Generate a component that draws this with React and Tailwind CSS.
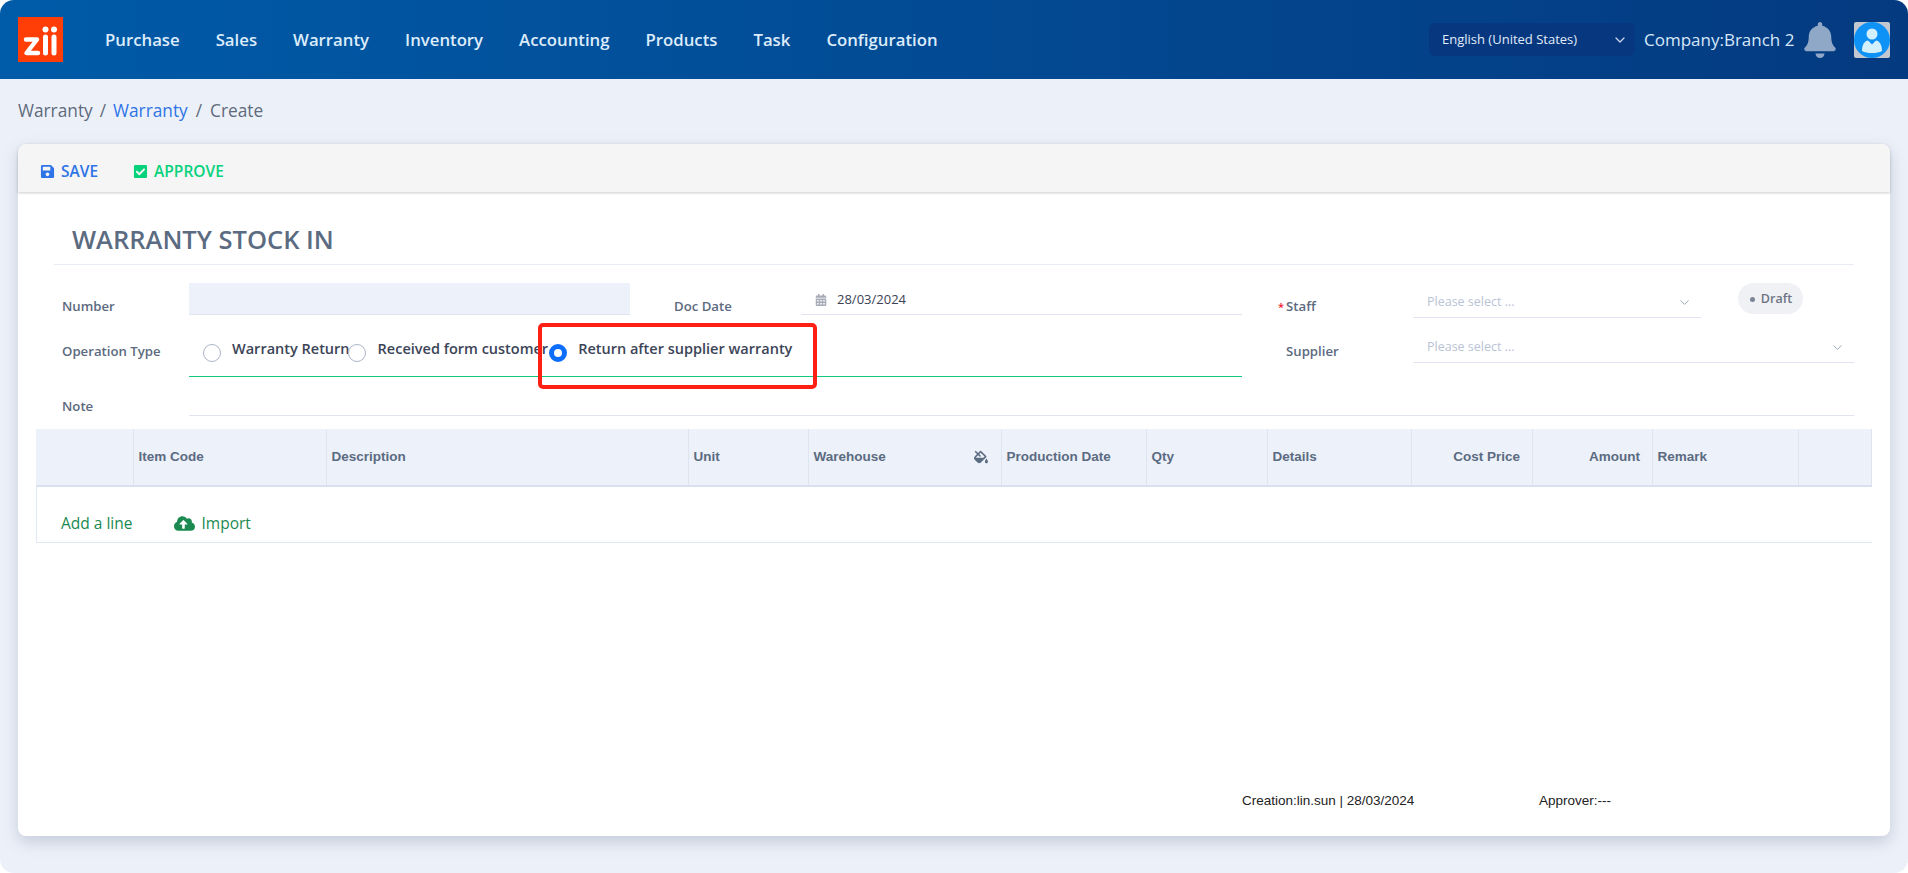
import React from "react";
import { FaSave, FaCheckSquare, FaCalendarAlt, FaFillDrip, FaCloudUploadAlt, FaBell } from "react-icons/fa";
import { ChevronDown } from "lucide-react";

function Logo() {
  return (
    <svg width="45" height="45" viewBox="0 0 45 45" className="shrink-0">
      <rect width="45" height="45" fill="#ff3d06" />
      <path d="M8 22.5H19L8.5 36H20" fill="none" stroke="#fff" strokeWidth="4.4" strokeLinecap="round" strokeLinejoin="round" />
      <circle cx="27.5" cy="12.5" r="3" fill="#fff" />
      <circle cx="36" cy="12.5" r="3" fill="#fff" />
      <path d="M27.5 20V36M36 20V36" stroke="#fff" strokeWidth="5" strokeLinecap="round" />
    </svg>
  );
}

function Avatar() {
  return (
    <svg width="36" height="36" viewBox="0 0 36 36" className="shrink-0">
      <rect width="36" height="36" rx="2" fill="#c3c8d0" />
      <circle cx="18" cy="18" r="18" fill="#0e92f5" />
      <circle cx="18" cy="12" r="5.5" fill="#d3f0ff" />
      <path d="M8 29c0-7 3-10 6-10.5l4 4 4-4c3 .5 6 3.5 6 10.5-3 1.5-6 2-10 2s-7-.5-10-2z" fill="#d3f0ff" />
    </svg>
  );
}

const nav = ["Purchase", "Sales", "Warranty", "Inventory", "Accounting", "Products", "Task", "Configuration"];

function Radio({ checked, className = "" }) {
  if (checked) {
    return <span className={`mt-[14px] h-[18px] w-[18px] shrink-0 rounded-full border-[5px] border-[#0d6efd] bg-white ${className}`} />;
  }
  return <span className={`mt-[14px] h-[18px] w-[18px] shrink-0 rounded-full border border-[#adb5c7] bg-white ${className}`} />;
}

function Placeholder({ top }) {
  return (
    <div className={`flex items-center justify-between pl-[14px] pr-[9px] text-[12.5px] font-normal text-[#b9c3d6] ${top}`}>
      <span>Please select ...</span>
      <ChevronDown size={15} strokeWidth={1.5} className="text-[#98a3b6]" />
    </div>
  );
}

const columns = [
  { w: "w-[98px]", label: "" },
  { w: "w-[193px]", label: "Item Code" },
  { w: "w-[362px]", label: "Description" },
  { w: "w-[120px]", label: "Unit" },
  { w: "w-[193px]", label: "Warehouse", icon: true },
  { w: "w-[145px]", label: "Production Date" },
  { w: "w-[121px]", label: "Qty" },
  { w: "w-[144px]", label: "Details" },
  { w: "w-[121px]", label: "Cost Price", right: true },
  { w: "w-[120px]", label: "Amount", right: true },
  { w: "w-[146px]", label: "Remark" },
  { w: "flex-1", label: "" },
];

export default function App() {
  return (
    <div className="flex h-[873px] w-full flex-col overflow-hidden rounded-[14px] bg-[#ecf1f9] font-['Open_Sans',sans-serif]">
      <header className="flex h-[79px] shrink-0 items-center bg-gradient-to-r from-[#005ba8] to-[#043a80] pl-[18px] pr-[18px]">
        <Logo />
        <nav className="ml-[42px] flex gap-[36px] text-[16.75px] font-semibold text-[#dcecfb]">
          {nav.map((n) => (
            <span key={n}>{n}</span>
          ))}
        </nav>
        <div className="ml-auto flex h-[33px] w-[206px] items-center justify-between rounded-[6px] bg-[#06377f] pl-[13px] pr-[7px] pt-[1px] text-[13px] text-[#e2ecf8]">
          <span>English (United States)</span>
          <ChevronDown size={16} strokeWidth={2} className="text-[#c6d3e6]" />
        </div>
        <span className="ml-[9px] w-[158px] text-[17px] text-[#d6e8fa]">Company:Branch 2</span>
        <FaBell size={36} className="shrink-0 text-[#8fa8c8]" />
        <span className="ml-[16px]">
          <Avatar />
        </span>
      </header>

      <div className="flex h-[63px] shrink-0 items-center pl-[18px] text-[17.3px] text-[#5f6a7c]">
        <span>Warranty</span>
        <span className="mx-[7px]">/</span>
        <span className="text-[#2f74e6]">Warranty</span>
        <span className="mx-[8px]">/</span>
        <span>Create</span>
      </div>

      <main className="mx-[18px] mt-[2px] flex h-[692px] flex-col rounded-[8px] bg-white shadow-[0_6px_16px_rgba(60,75,110,0.22)]">
        <div className="flex h-[48px] shrink-0 items-center rounded-t-[8px] bg-[#f5f5f5] pl-[22px] pt-[7px] text-[15.5px] font-semibold shadow-[0_1px_3px_rgba(0,0,0,0.2)]">
          <span className="flex items-center gap-[6px] text-[#2f74e6]">
            <FaSave size={15} />
            SAVE
          </span>
          <span className="ml-[35px] flex items-center gap-[6px] text-[#07d27c]">
            <FaCheckSquare size={15} />
            APPROVE
          </span>
        </div>

        <div className="mx-[36px] flex h-[73px] shrink-0 items-center border-b border-[#e8edf5] pl-[18px] pt-[23px] text-[25.5px] font-semibold text-[#5b6b81]">
          WARRANTY STOCK IN
        </div>

        <div className="mt-[18px] pl-[44px] pr-[36px] text-[13.2px] font-semibold text-[#5c6a80]">
          <div className="flex h-[47px]">
            <span className="w-[127px] pt-[14px]">Number</span>
            <div className="h-[32px] w-[441px] border-b border-[#dfe4f0] bg-[#edf1f9]" />
            <span className="ml-[44px] w-[127px] pt-[14px]">Doc Date</span>
            <div className="flex h-[32px] w-[441px] items-start gap-[10px] border-b border-[#dfe4f0] pl-[14px] pt-[7px] text-[13px] font-normal text-[#3b4354]">
              <FaCalendarAlt size={12} className="mt-[4px] text-[#a9acb8]" />
              <span>28/03/2024</span>
            </div>
            <span className="ml-[36px] w-[135px] pt-[14px]">
              <span className="mr-[2px] text-[11px] text-[#f5222d]">*</span>Staff
            </span>
            <div className="h-[35px] w-[288px] border-b border-[#dfe4f0]">
              <Placeholder top="pt-[10px]" />
            </div>
            <div className="ml-[37px] flex h-[31px] w-[65px] items-center justify-center gap-[6px] rounded-full bg-[#f0f1f4] pl-[1px] pt-[1px] text-[12.5px] text-[#6b7585]">
              <span className="h-[5px] w-[5px] rounded-full bg-[#7b8597]" />
              Draft
            </div>
          </div>

          <div className="flex h-[47px]">
            <span className="w-[127px] pt-[12px]">Operation Type</span>
            <div className="relative flex h-[47px] w-[1053px] items-start border-b border-[#0fca7a] pl-[14px] text-[14.5px] text-[#3c4457]">
              <Radio />
              <span className="ml-[11px] pt-[8px]">Warranty Return</span>
              <Radio className="ml-[-2px]" />
              <span className="ml-[12px] pt-[8px]">Received form customer</span>
              <Radio checked className="ml-[1px]" />
              <span className="ml-[11px] pt-[8px]">Return after supplier warranty</span>
              <div className="absolute left-[349px] top-[-7px] h-[66px] w-[279px] rounded-[5px] border-[4px] border-[#ff2015]" />
            </div>
            <span className="ml-[44px] w-[127px] pt-[12px]">Supplier</span>
            <div className="h-[33px] flex-1 border-b border-[#dfe4f0]">
              <Placeholder top="pt-[8px]" />
            </div>
          </div>

          <div className="flex h-[39px]">
            <span className="w-[127px] pt-[20px]">Note</span>
            <div className="h-[39px] flex-1 border-b border-[#dfe4f0]" />
          </div>
        </div>

        <div className="mx-[18px] mt-[13px] shrink-0">
          <div className="flex h-[58px] border-b-2 border-[#d8e2ef] bg-[#edf1f9] font-['Liberation_Sans',sans-serif] text-[13.5px] font-bold text-[#5b6b81]">
            {columns.map((c, i) => (
              <div
                key={i}
                className={`${c.w} flex items-center justify-between border-r border-[#dfe5f0] px-[4.5px] ${c.right ? "justify-end pr-[12px]" : ""}`}
              >
                <span>{c.label}</span>
                {c.icon && <FaFillDrip size={14} className="mr-[9px]" />}
              </div>
            ))}
          </div>
          <div className="flex h-[56px] items-center gap-[42px] border-b border-l border-[#e0e8f2] pl-[24px] pt-[18px] text-[15.5px] font-medium text-[#1a8a50]">
            <span>Add a line</span>
            <span className="flex items-center gap-[6px]">
              <FaCloudUploadAlt size={21} />
              Import
            </span>
          </div>
        </div>

        <footer className="mt-auto flex pb-[25px] pl-[1224px] font-['Liberation_Sans',sans-serif] text-[13.5px] text-[#222]">
          <span className="w-[297px]">Creation:lin.sun | 28/03/2024</span>
          <span>Approver:---</span>
        </footer>
      </main>
    </div>
  );
}
